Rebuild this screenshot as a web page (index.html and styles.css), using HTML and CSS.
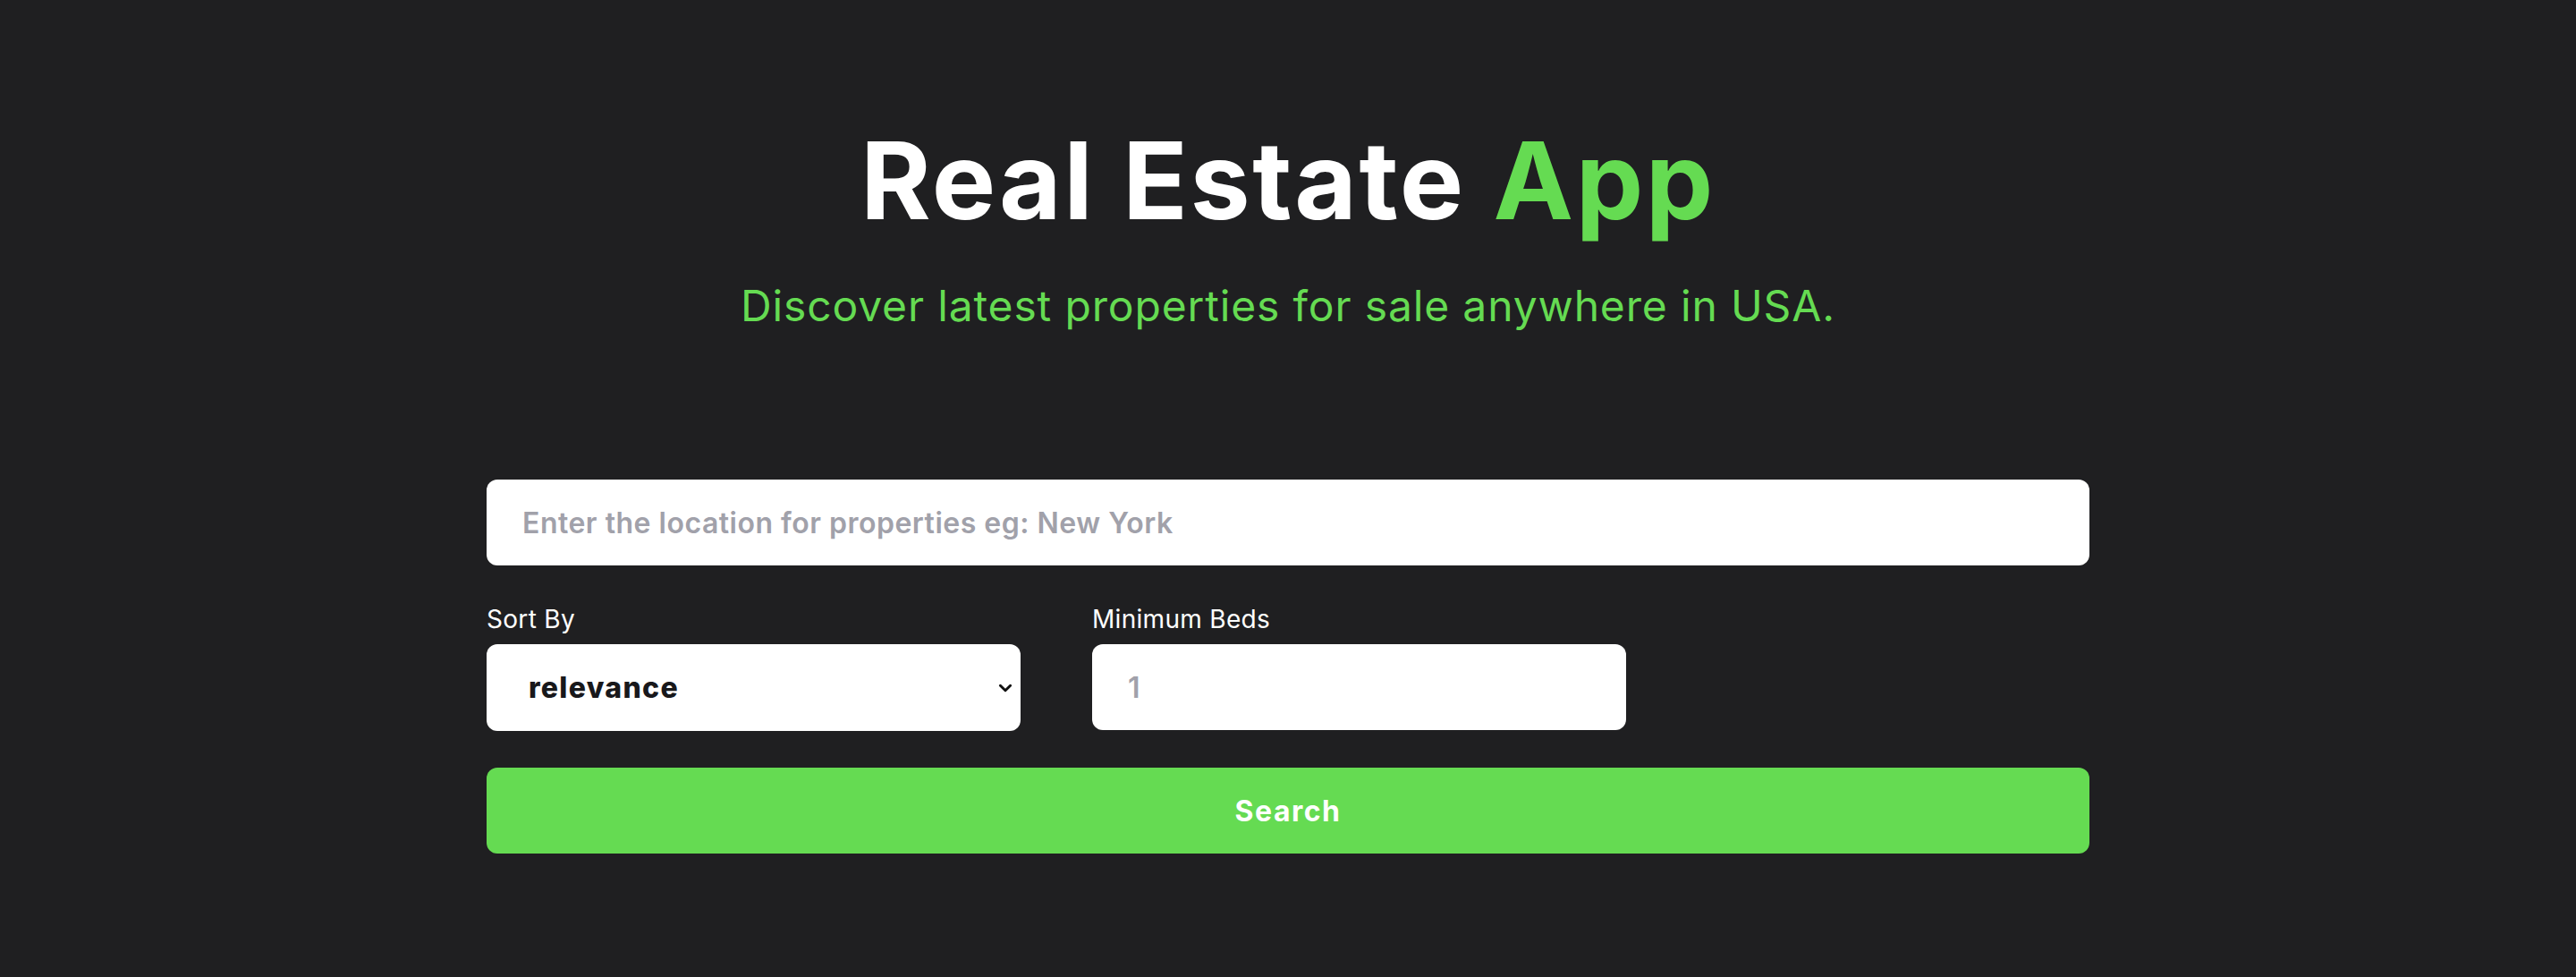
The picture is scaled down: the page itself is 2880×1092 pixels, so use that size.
FILE: index.html
```html
<!DOCTYPE html>
<html lang="en">
<head>
<meta charset="utf-8">
<title>Real Estate App</title>
<link rel="stylesheet" href="styles.css">
</head>
<body>
<main class="page">
  <header class="hero">
    <h1 class="title">Real Estate <span class="accent">App</span></h1>
    <p class="subtitle">Discover latest properties for sale anywhere in USA.</p>
  </header>
  <form class="search-form">
    <input class="field location" type="text" placeholder="Enter the location for properties eg: New York">
    <div class="filters">
      <label class="filter">
        <span class="label">Sort By</span>
        <span class="select-wrap">
          <select class="field select">
            <option>relevance</option>
            <option>price</option>
            <option>newest</option>
          </select>
          <svg class="chevron" viewBox="0 0 16 16" width="18" height="18" aria-hidden="true"><path d="M3 5.5 8 10.5 13 5.5" fill="none" stroke="#111" stroke-width="2.6" stroke-linecap="round" stroke-linejoin="round"/></svg>
        </span>
      </label>
      <label class="filter">
        <span class="label">Minimum Beds</span>
        <input class="field beds" type="number" placeholder="1">
      </label>
    </div>
    <button class="search-btn" type="button">Search</button>
  </form>
</main>
</body>
</html>
```
FILE: styles.css
```css
* { box-sizing: border-box; }
html, body {
  margin: 0;
  padding: 0;
  background: #1f1f21;
  height: 100%;
}
body {
  font-family: Inter, "Open Sans", "Liberation Sans", sans-serif;
  color: #fff;
}
.page {
  width: 1792px;
  margin: 0 auto;
  padding-top: 142px;
}
.hero {
  text-align: center;
}
.title {
  margin: 0;
  font-size: 120px;
  line-height: 1;
  font-weight: 700;
  letter-spacing: 2.5px;
  color: #ffffff;
}
.accent {
  color: #65db52;
}
.subtitle {
  margin: 56px 0 0;
  font-size: 48px;
  line-height: 1;
  font-weight: 400;
  letter-spacing: 0.85px;
  color: #65db52;
}
.search-form {
  margin-top: 170px;
  display: flex;
  flex-direction: column;
}
.field {
  display: block;
  width: 100%;
  height: 96px;
  border: none;
  border-radius: 12px;
  background: #ffffff;
  font-family: inherit;
  font-size: 32px;
  font-weight: 600;
  letter-spacing: 0.5px;
  color: #18181b;
  padding: 0 40px;
  outline: none;
}
.field::placeholder {
  color: #a1a1aa;
  opacity: 1;
}
.filters {
  display: grid;
  grid-template-columns: 597px 597px;
  column-gap: 80px;
  margin-top: 46px;
}
.filter {
  display: flex;
  flex-direction: column;
}
.label {
  font-size: 28px;
  line-height: 1;
  font-weight: 400;
  letter-spacing: 0.3px;
  color: #ffffff;
  margin-bottom: 14px;
}
.select-wrap {
  position: relative;
  display: block;
}
.select {
  appearance: none;
  -webkit-appearance: none;
  font-weight: 800;
  letter-spacing: 1.3px;
  padding-left: 47px;
  height: 97px;
}
.chevron {
  position: absolute;
  right: 8px;
  top: 40px;
}
.beds {
  -moz-appearance: textfield;
}
.beds::-webkit-outer-spin-button,
.beds::-webkit-inner-spin-button {
  -webkit-appearance: none;
  margin: 0;
}
.search-btn {
  margin-top: 41px;
  height: 96px;
  width: 100%;
  border: none;
  border-radius: 12px;
  background: #65db52;
  color: #ffffff;
  font-family: inherit;
  font-size: 32px;
  font-weight: 700;
  letter-spacing: 1.5px;
  cursor: pointer;
}
```
